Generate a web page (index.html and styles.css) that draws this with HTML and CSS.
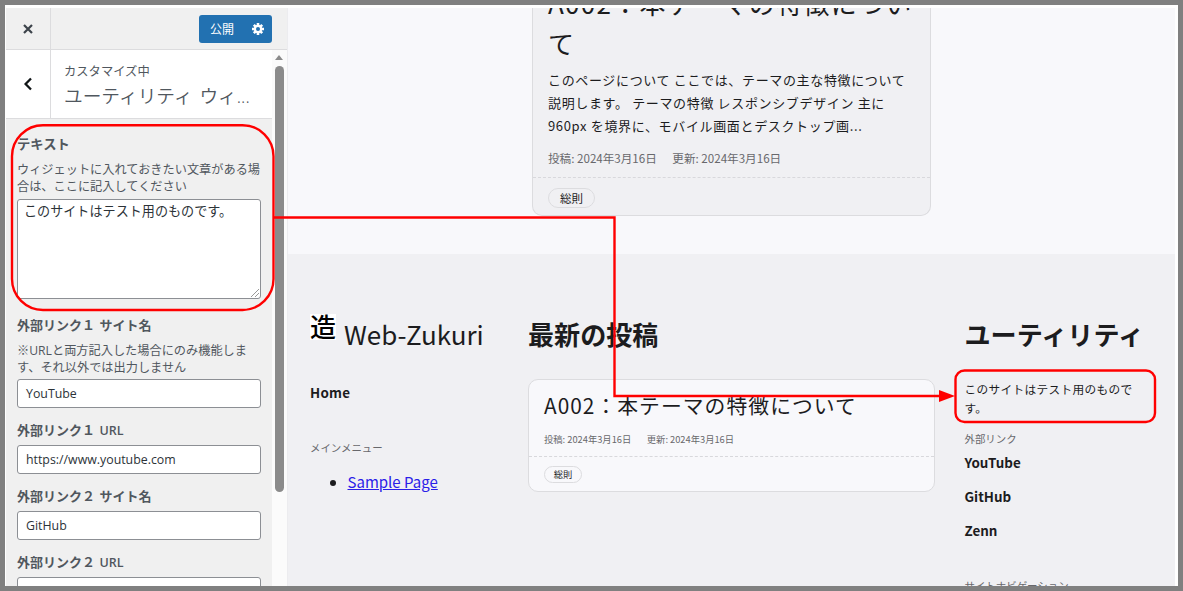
FILE: index.html
```html
<!DOCTYPE html>
<html lang="ja">
<head>
<meta charset="utf-8">
<title>カスタマイズ中: ユーティリティ</title>
<link rel="stylesheet" href="styles.css">
</head>
<body>
<div class="window">
  <aside class="sidebar">
    <header class="topbar">
      <div class="close"><svg width="12" height="12" viewBox="0 0 12 12"><path d="M2 2l8 8M10 2l-8 8" stroke="#3c434a" stroke-width="2.2" fill="none"/></svg></div>
      <div class="publish">
        <span class="publish-label">公開</span>
        <svg width="12" height="12" viewBox="0 0 12 12"><g stroke="#fff" stroke-width="2.6"><path d="M6 0v12M0 6h12M1.8 1.8l8.4 8.4M10.2 1.8l-8.4 8.4"/></g><circle cx="6" cy="6" r="4.2" fill="#fff"/><circle cx="6" cy="6" r="2" fill="#2271b1"/></svg>
      </div>
    </header>
    <div class="panel">
      <div class="controls">
        <div class="section-head">
          <div class="back"><svg width="10" height="14" viewBox="0 0 10 14"><path d="M8 1.5L2.6 7 8 12.500" stroke="#101517" stroke-width="2.3" fill="none"/></svg></div>
          <div class="section-title"><p class="crumb">カスタマイズ中</p><h3 class="name">ユーティリティ ウィ<span class="dots">...</span></h3></div>
        </div>
        <div class="fields">
          <div class="field field-first">
            <label class="label">テキスト</label>
            <p class="help">ウィジェットに入れておきたい文章がある場<br>合は、ここに記入してください</p>
            <div class="textarea"><span>このサイトはテスト用のものです。</span><svg class="grip" width="8" height="8" viewBox="0 0 8 8"><path d="M0 8L8 0M4 8l4-4" stroke="#999" fill="none"/></svg></div>
          </div>
          <div class="field">
            <label class="label">外部リンク１ <span class="after">サイト名</span></label>
            <p class="help">※URLと両方記入した場合にのみ機能しま<br>す、それ以外では出力しません</p>
            <div class="input tight">YouTube</div>
          </div>
          <div class="field"><label class="label">外部リンク１ <span class="after latin">URL</span></label><div class="input">https://www.youtube.com</div></div>
          <div class="field"><label class="label">外部リンク２ <span class="after">サイト名</span></label><div class="input">GitHub</div></div>
          <div class="field"><label class="label">外部リンク２ <span class="after latin">URL</span></label><div class="input"></div></div>
        </div>
      </div>
      <div class="scroll"><svg width="14" height="15" viewBox="0 0 14 15"><path d="M3 10L7 5l4 5z" fill="#8b8b8b"/></svg><div class="thumb"></div></div>
    </div>
  </aside>
  <main class="preview">
    <section class="content">
      <article class="card">
        <h2 class="card-title">A002：本テーマの特徴につい<br>て</h2>
        <p class="excerpt">このページについて ここでは、テーマの主な特徴について<br>説明します。 テーマの特徴 レスポンシブデザイン 主に<br>960px を境界に、モバイル画面とデスクトップ画...</p>
        <p class="meta"><span>投稿: 2024年3月16日</span><span>更新: 2024年3月16日</span></p>
        <div class="tags"><span class="tag">総則</span></div>
      </article>
    </section>
    <footer class="footer">
      <div class="col brand-col">
        <div class="brand"><span class="logo">造</span><span>Web-Zukuri</span></div>
        <a class="strong home">Home</a>
        <p class="small menu">メインメニュー</p>
        <ul class="list"><li><a href="#">Sample Page</a></li></ul>
      </div>
      <div class="col posts-col">
        <h2 class="heading">最新の投稿</h2>
        <article class="post">
          <h3 class="post-title">A002：本テーマの特徴について</h3>
          <p class="meta post-meta"><span>投稿: 2024年3月16日</span><span>更新: 2024年3月16日</span></p>
          <div class="tags post-tags"><span class="tag post-tag">総則</span></div>
        </article>
      </div>
      <div class="col util-col">
        <h2 class="heading">ユーティリティ</h2>
        <p class="note">このサイトはテスト用のもので<br>す。</p>
        <p class="small">外部リンク</p>
        <nav class="links"><a class="strong">YouTube</a><a class="strong">GitHub</a><a class="strong">Zenn</a></nav>
        <p class="small sitenav">サイトナビゲーション</p>
      </div>
    </footer>
  </main>
</div>
<svg class="annotation" width="1183" height="591" viewBox="0 0 1183 591">
  <g fill="none" stroke="#f00" stroke-width="2.4">
    <rect x="12" y="125.200" width="261.500" height="184.800" rx="31"/>
    <path d="M274 217.500H614.500V396H942"/>
    <rect x="955.500" y="370.500" width="199.500" height="51.500" rx="9"/>
  </g>
  <path d="M939 390l16 6-16 6z" fill="#f00"/>
</svg>
</body>
</html>
```
FILE: styles.css
```css
* { box-sizing: border-box; }
body {
  margin: 0; width: 1183px; height: 591px; overflow: hidden; position: relative;
  background: #808080; padding: 5px;
  font-family: "Noto Sans CJK JP", sans-serif;
}
p, h2, h3, ul { margin: 0; padding: 0; font-weight: 400; }
.window {
  display: flex; width: 1173px; height: 581px; overflow: hidden;
  background: #fff; padding: 3px 3px 0 1px;
}

/* Customizer sidebar */
.sidebar {
  flex: none; width: 282px; height: 578px; display: flex; flex-direction: column;
  background: #f0f0f0; border-right: 1px solid #ececef; color: #50575e;
  font-family: "Open Sans", "Noto Sans CJK JP", sans-serif;
}
.topbar {
  flex: none; height: 42px; display: flex; justify-content: space-between;
  border-bottom: 1px solid #dcdcde;
}
.close, .back {
  flex: none; width: 45px; display: flex; align-items: center; justify-content: center;
  border-right: 1px solid #dcdcde;
}
.publish {
  width: 73px; height: 28px; margin: 7px 15px 0 0; padding: 0 8px 0 11px;
  display: flex; align-items: center; justify-content: space-between;
  background: #2271b1; border-radius: 3px; color: #fff; font-size: 12px;
}
.publish-label { line-height: 28px; padding-top: 2px; }
.panel { display: flex; flex: 1; min-height: 0; }
.controls { flex: none; width: 266px; overflow: hidden; }
.section-head {
  height: 69px; display: flex; background: #fff; border-bottom: 1px solid #dcdcde;
}
.section-title { padding: 12px 0 0 13px; white-space: nowrap; }
.crumb { font-size: 12.300px; line-height: 20px; }
.name { font-size: 18.700px; line-height: 28px; font-weight: 350; word-spacing: 2px; }
.dots { font-size: 18px; }
.fields { padding: 15px 0 0 11px; }
.field { width: 244px; padding-top: 12px; white-space: nowrap; }
.field-first { padding: 0 0 4px; }
.label { display: block; height: 20px; line-height: 20px; font-size: 13px; font-weight: 600; }
.field-first .label { font-size: 13.300px; }
.after { margin-left: 1px; }
.latin { font-size: 12.500px; }
.help { font-size: 12.200px; line-height: 16.700px; margin-top: 8px; height: 32px; }
.textarea, .input { background: #fff; border: 1px solid #8c8f94; border-radius: 3px; color: #2c3338; }
.textarea { position: relative; height: 100px; margin-top: 5px; padding: 1px 6px; font-size: 13.100px; line-height: 20px; }
.grip { position: absolute; right: 1px; bottom: 1px; }
.input { height: 29px; margin-top: 5px; padding: 0 8px; font-size: 12.350px; line-height: 27px; }
.tight { margin-top: 4px; }
.scroll { flex: none; width: 15px; background: #fbfbfb; }
.scroll svg { display: block; }
.thumb { width: 9px; height: 426px; margin: 1px 0 0 3px; background: #8b8b8b; border-radius: 5px; }

/* Site preview */
.preview { flex: 1; min-width: 0; background: #f8f8fb; color: #1c1c1e; }
.content { height: 246px; padding-left: 244px; }
.card {
  width: 399px; height: 208px; overflow: hidden; background: #f0f0f3;
  border: 1px solid #dcdcdf; border-top: 0; border-radius: 0 0 10px 10px;
}
.card-title {
  font-size: 26px; letter-spacing: 1.300px; line-height: 40px;
  margin: -25px 0 0 15px; white-space: nowrap;
}
.excerpt { font-size: 13px; letter-spacing: .650px; line-height: 22.750px; margin: 6px 0 0 15px; white-space: nowrap; }
.meta { display: flex; gap: 15.500px; margin: 12px 0 0 15px; font-size: 11.600px; line-height: 18px; color: #68686c; white-space: nowrap; }
.tags { border-top: 1px dashed #d8d8dc; margin-top: 10px; padding: 10px 15px 0; display: flex; }
.tag {
  width: 47px; height: 20px; line-height: 18px; border: 1px solid #dcdcdf;
  border-radius: 10px; text-align: center; font-size: 11.500px;
}
.footer {
  display: grid; grid-template-columns: 219px 407px 1fr; column-gap: 0;
  height: 332px; background: #f0f0f3; padding: 60px 0 0 22px; overflow: hidden;
}
.posts-col { margin-left: -1px; }
.col { white-space: nowrap; }
.brand { display: flex; align-items: flex-start; gap: 8px; font-size: 26px; line-height: 40px; }
.logo { width: 26px; height: 26px; line-height: 23px; background: #fff; color: #000; font-weight: 500; }
.strong { display: block; font-weight: 700; font-size: 13.400px; line-height: 20px; }
.home { margin-top: 28px; letter-spacing: .300px; }
.small { font-size: 10.450px; line-height: 16px; color: #68686c; }
.menu { margin-top: 38px; }
.list { padding-left: 37.500px; margin-top: 14px; font-size: 15px; line-height: 24px; }
.list a { color: #2a20e8; }
.heading { font-size: 26.100px; line-height: 40px; font-weight: 700; }
.post {
  width: 407px; height: 113px; margin-top: 25px; background: #f8f8fb;
  border: 1px solid #dcdcdf; border-radius: 10px;
}
.post-title { font-size: 20.800px; letter-spacing: 1.040px; line-height: 32px; margin: 9px 0 0 15px; }
.post-meta { font-size: 9.300px; line-height: 14px; margin-top: 11px; }
.post-tags { margin-top: 10px; padding-top: 9px; }
.post-tag { width: 38px; height: 17px; line-height: 15px; font-size: 9.300px; }
.util-col { padding-left: 28.500px; }
.note { font-size: 11.700px; letter-spacing: .320px; line-height: 19px; margin: 24.500px 0 14.500px; }
.links { display: grid; row-gap: 14px; margin-top: 5px; }
.sitenav { margin-top: 38px; }

/* Callout drawn over the page */
.annotation { position: absolute; left: 0; top: 0; }
```
